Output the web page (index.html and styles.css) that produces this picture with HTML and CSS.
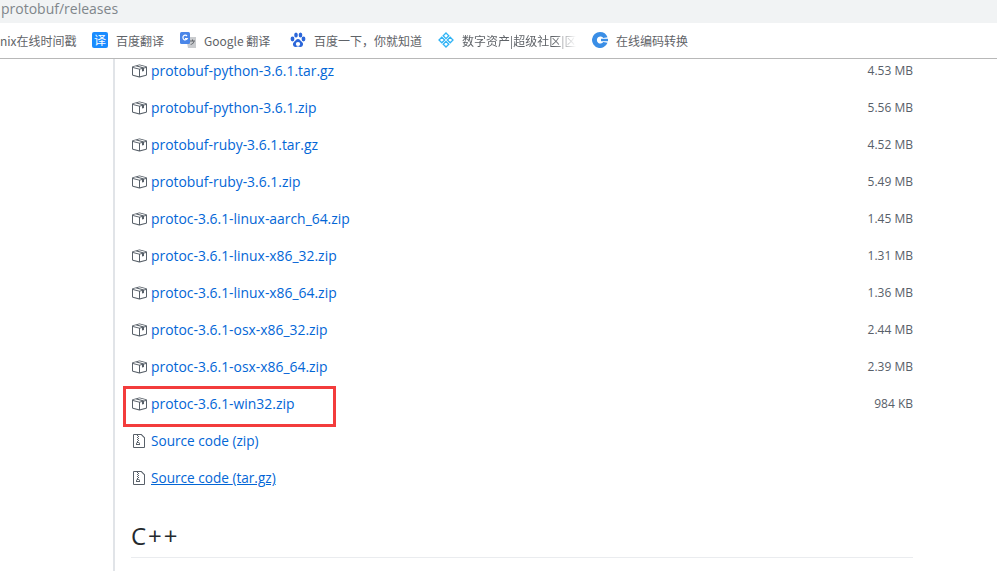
FILE: index.html
```html
<!DOCTYPE html>
<html lang="zh">
<head>
<meta charset="utf-8">
<title>protobuf/releases</title>
<link rel="stylesheet" href="styles.css">
</head>
<body>
<svg class="defs" width="0" height="0" aria-hidden="true">
  <symbol id="pkg" viewBox="0 0 16 16">
    <path fill="#586069" fill-rule="evenodd" d="M1 4.27v7.47c0 .45.3.84.75.97l6.5 1.73c.16.05.34.05.5 0l6.5-1.73c.45-.13.75-.52.75-.97V4.27c0-.45-.3-.84-.75-.97l-6.5-1.74a1.400 1.400 0 0 0-.5 0L1.750 3.300c-.45.130-.75.520-.75.970zm7 9.090l-6-1.590V5l6 1.610v6.750zM2 4l2.500-.67L11 5.060l-2.500.67L2 4zm13 7.770l-6 1.590V6.610l2-.55V8.500l2-.53V5.530L15 5v6.770zm-2-7.240L6.500 2.800l2-.53L15 4l-2 .53z"/>
  </symbol>
  <symbol id="zip" viewBox="0 0 12 16">
    <path fill="#586069" fill-rule="evenodd" d="M8.500 1H1a1 1 0 0 0-1 1v12a1 1 0 0 0 1 1h10a1 1 0 0 0 1-1V4.500L8.500 1zM11 14H1V2h3v1h1V2h3l3 3v9zM5 4V3h1v1H5zM4 4h1v1H4V4zm1 2V5h1v1H5zM4 6h1v1H4V6zm1 2V7h1v1H5zM4 9.280A2 2 0 0 0 3 11v1h4v-1a2 2 0 0 0-2-2V8H4v1.280zM6 10v1H4v-1h2z"/>
  </symbol>
</svg>
<div class="address"><span class="url">protobuf/releases</span></div>
<nav class="bookmarks">
  <span class="bm bm-first">nix在线时间戳</span>
  <span class="bm bm-fanyi"><span class="yi">译</span>百度翻译</span>
  <span class="bm bm-google">
    <svg class="ico" viewBox="0 0 16 16"><path fill="#c9cbce" d="M6 5h10v11H8z"/><path fill="#5f6368" d="M10 8.500h5v1h-5zM12 7.500h1v1h-1zM13.500 9.500l.8.300c-.5 1.500-1.500 2.500-3.500 3.200l-.3-.8c1.500-.5 2.500-1.300 3-2.700z"/><rect width="10" height="12" rx="1.500" fill="#4a86e8"/><path fill="none" stroke="#fff" stroke-width="1.200" d="M7 4a2.300 2.300 0 1 0 .3 2.500H5"/></svg>Google 翻译</span>
  <span class="bm bm-baidu">
    <svg class="ico" viewBox="0 0 16 16"><g fill="#2b66d9"><ellipse cx="2.500" cy="7" rx="1.900" ry="2.400"/><ellipse cx="6" cy="3" rx="1.800" ry="2.500"/><ellipse cx="10.500" cy="3" rx="1.800" ry="2.500"/><ellipse cx="13.500" cy="7" rx="1.900" ry="2.400"/><path d="M8 7c2 0 2.500 2 4 3 2 1.500 1 5-1.500 5-1 0-1.500-.5-2.500-.5s-1.500.5-2.500.5C3 15 2 11.500 4 10c1.500-1 2-3 4-3z"/></g><ellipse cx="8" cy="12" rx="2.200" ry="2" fill="#fff"/></svg>百度一下，你就知道</span>
  <span class="bm bm-asset">
    <svg class="ico" viewBox="0 0 16 16"><g fill="#fff" stroke="#2fb3f5" stroke-width="1.300"><path d="M8 1 10.800 3.800 8 6.600 5.200 3.800Z"/><path d="M12.200 5.200 15 8 12.200 10.800 9.400 8Z"/><path d="M3.800 5.200 6.600 8 3.800 10.800 1 8Z"/><path d="M8 9.400 10.800 12.200 8 15 5.200 12.200Z"/></g></svg><span class="fade">数字资产|超级社区|区</span></span>
  <span class="bm bm-code">
    <svg class="ico" viewBox="0 0 16 16"><path fill="#3a8ee6" d="M8 0a8 8 0 1 0 7.500 10.800L11.300 9.900a3.500 3.500 0 1 1 0-3.800L15.500 5.200A8 8 0 0 0 8 0z"/><path fill="#3a8ee6" d="M9 6.800h7v2.400H9z"/></svg>在线编码转换</span>
</nav>
<main class="page">
  <div class="content">
    <ul class="assets">
      <li class="asset"><svg class="pkg"><use href="#pkg"/></svg><a class="name">protobuf-python-3.6.1.tar.gz</a><span class="size">4.53 MB</span></li>
      <li class="asset"><svg class="pkg"><use href="#pkg"/></svg><a class="name">protobuf-python-3.6.1.zip</a><span class="size">5.56 MB</span></li>
      <li class="asset"><svg class="pkg"><use href="#pkg"/></svg><a class="name">protobuf-ruby-3.6.1.tar.gz</a><span class="size">4.52 MB</span></li>
      <li class="asset"><svg class="pkg"><use href="#pkg"/></svg><a class="name">protobuf-ruby-3.6.1.zip</a><span class="size">5.49 MB</span></li>
      <li class="asset"><svg class="pkg"><use href="#pkg"/></svg><a class="name">protoc-3.6.1-linux-aarch_64.zip</a><span class="size">1.45 MB</span></li>
      <li class="asset"><svg class="pkg"><use href="#pkg"/></svg><a class="name">protoc-3.6.1-linux-x86_32.zip</a><span class="size">1.31 MB</span></li>
      <li class="asset"><svg class="pkg"><use href="#pkg"/></svg><a class="name">protoc-3.6.1-linux-x86_64.zip</a><span class="size">1.36 MB</span></li>
      <li class="asset"><svg class="pkg"><use href="#pkg"/></svg><a class="name">protoc-3.6.1-osx-x86_32.zip</a><span class="size">2.44 MB</span></li>
      <li class="asset"><svg class="pkg"><use href="#pkg"/></svg><a class="name">protoc-3.6.1-osx-x86_64.zip</a><span class="size">2.39 MB</span></li>
      <li class="asset asset-marked"><svg class="pkg"><use href="#pkg"/></svg><a class="name">protoc-3.6.1-win32.zip</a><span class="size">984 KB</span><span class="mark"></span></li>
      <li class="asset"><svg class="zipicon"><use href="#zip"/></svg><a class="name src">Source code <span class="ext">(zip)</span></a></li>
      <li class="asset"><svg class="zipicon"><use href="#zip"/></svg><a class="name src under">Source code <span class="ext">(tar.gz)</span></a></li>
    </ul>
    <h2 class="title">C++</h2>
  </div>
</main>
</body>
</html>
```

FILE: styles.css
```css
* { box-sizing: border-box; }
html, body { margin: 0; height: 100%; }
body {
  width: 997px;
  height: 571px;
  overflow: hidden;
  background: #fff;
  font-family: "Open Sans", "Noto Sans CJK SC", sans-serif;
  display: flex;
  flex-direction: column;
}
.defs { display: block; height: 0; }
.address {
  height: 23px;
  background: #f1f3f4;
  flex: none;
  font-size: 14px;
  line-height: 17px;
  color: #80868b;
  padding-left: 1px;
}
.bookmarks {
  height: 36px;
  flex: none;
  display: flex;
  align-items: center;
  border-bottom: 1px solid #b8b8b8;
  font-family: "Noto Sans CJK SC", sans-serif;
  font-size: 12px;
  color: #5f6368;
  white-space: nowrap;
  padding-bottom: 1px;
}
.bm { display: flex; align-items: center; }
.bm-first { width: 92px; color: #5f6368; }
.bm-fanyi { width: 88px; }
.bm-google { width: 110px; }
.bm-baidu { width: 148px; }
.bm-asset { width: 154px; }
.ico { width: 16px; height: 16px; margin-right: 8px; flex: none; }
.yi {
  width: 16px; height: 16px; margin-right: 8px;
  background: #1a8cff; color: #fff; border-radius: 2px;
  font-size: 12px; line-height: 16px; text-align: center;
}
.fade {
  width: 114px; overflow: hidden;
  -webkit-mask-image: linear-gradient(to right, #000 80%, transparent 100%);
  mask-image: linear-gradient(to right, #000 80%, transparent 100%);
}
.page {
  flex: 1;
  overflow: hidden;
  margin-left: 113px;
  border-left: 2px solid #e1e4e8;
  padding-left: 16px;
}
.content { width: 782px; margin-top: -6px; }
.assets { list-style: none; margin: 0; padding: 0; }
.asset {
  position: relative;
  height: 37px;
  display: flex;
  align-items: center;
  font-size: 13.9px;
  padding-bottom: 2px;
}
.pkg { width: 16px; height: 16px; margin-right: 4px; flex: none; }
.zipicon { width: 12px; height: 16px; margin: 0 6px 0 2px; flex: none; }
.name { color: #0366d6; font-weight: 500; }
.src { font-size: 13.6px; }
.under { text-decoration: underline; }
.ext { font-weight: 400; }
.size { margin-left: auto; color: #586069; font-size: 12px; }
.mark {
  position: absolute;
  left: -8px; top: 0;
  width: 213px; height: 41px;
  border: 3px solid #f33c3c;
}
.title {
  margin: 21px 0 0;
  font-size: 24px;
  font-weight: 400;
  line-height: 36px;
  letter-spacing: 2px;
  color: #24292e;
  padding-bottom: 3px;
  border-bottom: 1px solid #eaecef;
}
```
